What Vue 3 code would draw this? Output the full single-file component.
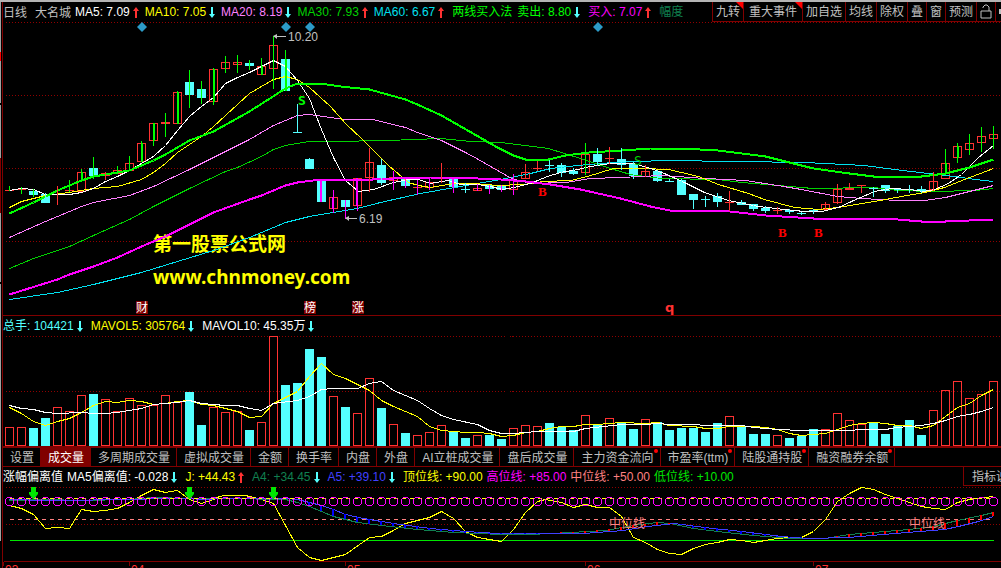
<script setup>
import { ref } from 'vue'

const X0 = 9
const STEP = 12
const xOf = (i) => X0 + STEP * i

// kind, high, body top, body bottom, low, volume top, wick colour, strip inside the body
const G = '#00ff00'
const M = '#ff00ff'
const R = '#ff3232'
const C = '#54ffff'
const rows = [
  ['r', 186, 190, 190, 190, 427, G], ['r', 187, 189, 189, 193, 427, G], ['c', 189, 191, 194, 196, 428, G],
  ['c', 193, 194, 202, 202, 418, C], ['r', 186, 194, 194, 204, 407, R], ['r', 180, 190, 190, 191, 411, G],
  ['r', 169, 172, 191, 180, 395, G, 1], ['c', 157, 168, 175, 178, 394, G], ['r', 172, 173, 175, 179, 399, R],
  ['r', 166, 170, 173, 173, 411, G], ['r', 156, 163, 170, 168, 398, G], ['r', 141, 143, 161, 161, 405, G, 1],
  ['r', 123, 123, 140, 145, 405, G, 1], ['r', 113, 122, 123, 136, 395, G], ['r', 91, 92, 123, 123, 402, G, 1],
  ['c', 70, 82, 94, 107, 392, G], ['c', 81, 89, 97, 103, 425, G], ['r', 68, 69, 101, 104, 407, G, 1],
  ['r', 56, 62, 68, 72, 412, G], ['r', 55, 62, 64, 72, 411, G], ['c', 60, 63, 65, 69, 430, G],
  ['r', 58, 66, 74, 74, 422, G, 1], ['r', 36, 45, 68, 88, 336, G], ['c', 50, 59, 90, 90, 385, G, 1],
  ['c', 104, 132, 132, 132, 383, C], ['c', 158, 159, 168, 168, 349, C], ['c', 179, 179, 201, 201, 357, M, 1],
  ['r', 190, 197, 208, 212, 396, M, 1], ['c', 200, 200, 206, 218, 407, M], ['r', 178, 178, 205, 210, 413, M, 1],
  ['r', 148, 162, 177, 191, 378, R], ['c', 159, 165, 182, 184, 408, C], ['r', 171, 177, 180, 189, 424, M],
  ['c', 177, 179, 185, 187, 433, M], ['r', 180, 187, 187, 194, 435, M], ['r', 178, 182, 187, 189, 432, M],
  ['r', 163, 178, 178, 182, 425, R], ['c', 178, 178, 186, 192, 432, M, 1], ['c', 183, 189, 189, 192, 438, C],
  ['r', 184, 188, 190, 190, 435, M], ['c', 185, 185, 188, 193, 435, M], ['c', 185, 186, 189, 191, 439, M],
  ['r', 174, 180, 189, 194, 428, M], ['r', 164, 172, 178, 178, 425, R], ['r', 161, 168, 168, 170, 426, R],
  ['c', 160, 165, 165, 171, 423, C], ['c', 163, 165, 172, 176, 427, C], ['c', 168, 171, 173, 174, 430, C],
  ['r', 143, 154, 172, 174, 415, G], ['c', 148, 154, 161, 165, 424, C], ['r', 147, 158, 158, 163, 418, R],
  ['c', 148, 159, 164, 169, 423, C], ['c', 162, 164, 175, 178, 429, C], ['r', 165, 171, 176, 176, 419, R],
  ['c', 170, 171, 180, 181, 422, C], ['c', 179, 181, 181, 181, 430, C], ['c', 179, 180, 194, 194, 428, C],
  ['c', 194, 194, 199, 208, 428, C], ['c', 196, 199, 199, 206, 432, C], ['c', 193, 196, 201, 206, 423, C],
  ['r', 191, 202, 202, 210, 416, R], ['c', 200, 202, 204, 204, 426, C], ['c', 204, 204, 208, 210, 434, C],
  ['c', 206, 208, 210, 212, 434, C], ['r', 207, 210, 210, 213, 435, R], ['c', 209, 210, 211, 213, 438, C],
  ['c', 212, 213, 213, 214, 436, C], ['c', 209, 210, 211, 213, 429, C], ['r', 202, 204, 209, 209, 429, R],
  ['r', 184, 189, 202, 203, 413, R], ['r', 183, 188, 189, 189, 420, R], ['r', 185, 185, 185, 192, 424, R],
  ['c', 187, 187, 188, 196, 422, C], ['c', 185, 185, 190, 192, 434, C], ['c', 189, 189, 189, 192, 426, C],
  ['c', 185, 189, 189, 192, 420, C], ['c', 186, 189, 190, 192, 435, C], ['r', 172, 181, 189, 190, 410, R],
  ['r', 149, 163, 178, 172, 390, G, 1], ['r', 143, 146, 157, 162, 381, G, 1], ['r', 134, 143, 149, 154, 398, G],
  ['r', 127, 136, 142, 151, 394, G], ['r', 126, 134, 138, 148, 381, G]
]
const bars = rows.map(([kind, high, top, bottom, low, vol, wick, strip], i) => ({
  x: xOf(i), up: kind === 'r', high, top, bottom, low, vol, wick, strip, colour: kind === 'r' ? R : C
}))

const priceLines = [
  { c: '#00e1f0', w: 1, p: '9,299 57,292 93,284 141,272 177,261 213,250 249,237 285,222 309,216 333,212 357,208 380,202 420,193 460,186 500,179 530,173 550,168 577,165 613,162 663,160 738,161 804,162 864,165 894,169 928,173 954,176 975,179 993,181' },
  { c: '#00d200', w: 1, p: '9,268 33,258 69,246 93,235 129,219 153,206 189,188 225,171 237,167 261,156 273,149 285,145 309,141 330,141 387,140 440,138 470,141 500,142 548,148 580,158 610,168 630,174 661,178 717,179 741,182 777,185 813,188 873,187 897,190 933,191 975,190 993,188' },
  { c: '#ff80ff', w: 1, p: '9,237 45,221 81,206 93,202 129,195 153,186 189,169 213,157 249,139 273,125 297,115 309,114 330,117 345,119 372,119 405,127 417,132 441,140 465,152 478,159 511,178 530,183 565,182 590,178 620,177 661,175 705,178 745,180 777,185 801,189 837,196 861,198 897,200 924,200 945,197 969,191 993,185' },
  { c: '#ffff00', w: 1, p: '9,207 21,201 45,195 69,192 93,188 117,186 141,179 153,172 165,163 177,152 201,136 213,126 249,93 273,79 285,76 297,79 309,87 330,106 345,123 362,139 388,165 408,182 418,185 430,187 453,183 473,183 497,185 523,184 543,181 570,180 587,176 613,168 643,168 668,169 681,172 698,176 718,184 748,193 764,199 794,207 818,209 838,207 874,201 901,196 924,192 944,187 964,179 993,168' },
  { c: '#ffffff', w: 1, p: '9,190 21,188 33,189 45,194 57,194 69,194 81,192 93,188 105,181 117,176 129,170 141,163 153,156 165,145 177,130 189,116 201,106 213,97 225,83 237,77 249,72 261,66 273,60 285,66 297,80 309,98 321,129 333,157 345,180 358,191 373,189 393,182 408,179 418,179 430,183 448,180 460,184 477,184 490,186 502,189 513,187 530,183 547,176 560,172 577,169 590,166 610,163 633,163 650,168 664,173 684,182 704,192 728,200 758,206 784,209 804,211 821,211 838,207 851,201 874,191 891,188 909,189 923,191 934,189 948,183 961,174 978,157 993,145' },
  { c: '#00ff00', w: 2, p: '9,213 33,202 57,190 81,180 93,176 129,170 153,160 165,154 189,140 213,131 249,111 285,88 297,83 320,83 340,86 369,89 405,99 417,104 441,115 483,139 497,147 513,155 525,159 548,159 565,155 589,152 621,150 650,148 681,148 717,150 741,153 765,156 789,162 813,168 849,173 873,176 921,176 945,173 969,167 993,159' },
  { c: '#ff00ff', w: 2, p: '9,294 57,279 69,274 93,266 117,257 141,246 165,236 189,224 213,212 249,199 261,195 285,185 297,182 321,179 372,179 393,178 430,177 455,177 500,179 525,181 550,184 580,189 620,198 650,206 669,210 729,211 765,215 813,218 885,218 921,221 945,221 993,219' }
]

const volMa5 = '9,407 21,413 33,421 45,425 57,421 69,418 81,412 93,405 105,401 117,402 129,400 141,401 153,404 165,403 177,401 189,400 201,404 213,405 225,408 237,411 249,417 261,416 273,403 285,397 297,391 309,376 321,363 333,374 345,378 357,384 369,390 381,400 393,406 405,411 417,416 429,426 441,430 453,431 465,432 477,432 489,433 501,436 513,435 525,432 537,431 549,428 561,426 573,426 585,424 597,424 609,423 621,422 645,423 657,422 669,425 693,426 705,428 717,428 729,426 753,426 765,427 777,429 789,433 801,435 813,434 825,433 837,429 849,425 861,423 873,422 885,423 897,425 909,425 921,428 933,425 945,416 957,407 969,403 981,395 993,389'
const volMa10 = '9,405 21,408 33,409 45,412 57,413 81,412 93,413 105,413 117,412 141,408 153,404 165,403 177,402 189,400 201,403 225,405 237,405 249,408 261,410 273,403 297,400 309,396 321,389 333,388 357,388 369,383 381,381 393,390 417,400 429,408 441,415 453,419 477,424 489,430 501,433 513,433 537,431 573,431 585,428 621,424 645,424 657,423 669,424 693,424 705,425 741,425 753,427 777,429 801,430 837,430 873,429 885,429 897,427 921,425 933,423 945,420 957,416 969,414 981,411 993,407'

const lineJ = '9,505 21,508 33,514 45,528 57,527 69,528 81,509 93,511 105,510 117,508 129,502 141,495 153,489 165,492 177,490 189,499 201,503 213,499 219,496 225,495 245,495 261,499 273,503 285,525 297,547 309,557 321,560 333,557 345,554 369,537 381,536 393,530 405,523 429,517 441,511 453,518 465,531 477,537 489,539 501,541 513,529 525,512 537,501 545,499 561,502 573,507 585,504 597,507 609,507 621,516 633,537 645,542 657,549 669,553 681,554 693,548 705,544 717,542 729,539 741,540 753,542 765,540 777,538 789,537 801,537 813,531 825,519 837,501 849,493 861,487 873,489 885,494 897,498 909,502 921,506 933,508 945,509 957,502 969,499 993,496'
const lineA5 = '9,499 45,500 141,499 153,498 189,498 201,499 225,498 285,498 297,499 309,502 321,505 333,509 345,514 363,518 393,523 430,528 465,531 497,533 583,533 623,530 647,526 665,524 674,523 704,527 741,531 781,536 808,538 848,537 894,533 944,529 958,526 978,521 993,516'
const lineA4 = '9,500 45,499 81,500 129,499 153,497 189,498 225,498 285,499 297,502 309,506 321,511 333,516 345,519 357,522 381,525 417,529 453,532 501,534 530,534 570,532 605,530 633,525 657,522 670,523 693,528 717,531 753,535 789,538 825,538 849,534 885,531 909,529 933,526 957,520 981,515 993,512'

function valueAt(line, x) {
  const pts = line.split(' ').map((s) => s.split(',').map(Number))
  for (let i = 1; i < pts.length; i++) {
    const [ax, ay] = pts[i - 1]
    const [bx, by] = pts[i]
    if (x <= bx) return Math.round(ay + ((by - ay) * (x - ax)) / (bx - ax))
  }
  return pts[pts.length - 1][1]
}
const spreads = bars
  .filter((b) => b.x >= 309)
  .map((b) => {
    const a4 = valueAt(lineA4, b.x)
    const a5 = valueAt(lineA5, b.x)
    return { x: b.x, y: Math.min(a4, a5), h: Math.abs(a4 - a5), c: a4 > a5 ? '#0000ff' : '#ff0000' }
  })
  .filter((s) => s.h > 0)

const priceLegend = [
  { t: 'MA5: 7.09', c: '#ffffff', d: 'up' },
  { t: 'MA10: 7.05', c: '#ffff00', d: 'down' },
  { t: 'MA20: 8.19', c: '#ff80ff', d: 'down' },
  { t: 'MA30: 7.93', c: '#00d200', d: 'up' },
  { t: 'MA60: 6.67', c: '#00e1f0', d: 'up' }
]
const signalLegend = [
  { t: '卖出: 8.80', c: '#00ff00', d: 'down' },
  { t: '买入: 7.07', c: '#ff00ff', d: 'up' },
  { t: '幅度', c: '#108050' }
]
const volumeLegend = [
  { t: '总手: 104421', c: '#54ffff', d: 'down' },
  { t: 'MAVOL5: 305764', c: '#ffff00', d: 'down' },
  { t: 'MAVOL10: 45.35万', c: '#ffffff', d: 'down' }
]
const biasLegend = [
  { t: 'MA5偏离值: -0.028', c: '#ffffff', d: 'down' },
  { t: 'J: +44.43', c: '#ffff00', d: 'up' },
  { t: 'A4: +34.45', c: '#108050', d: 'down' },
  { t: 'A5: +39.10', c: '#4040ff', d: 'down' }
]
const levels = [
  { t: '顶位线: +90.00', c: '#ffff00' },
  { t: '高位线: +85.00', c: '#ff00ff' },
  { t: '中位线: +50.00', c: '#ff8080' },
  { t: '低位线: +10.00', c: '#00e600' }
]
const tools = [
  { t: '九转', flag: true }, { t: '重大事件', flag: true, wide: true }, { t: '加自选' }, { t: '均线' },
  { t: '除权' }, { t: '叠' }, { t: '窗' }, { t: '预测' }
]
const tabs = [
  { t: '设置' }, { t: '成交量' }, { t: '多周期成交量' }, { t: '虚拟成交量' }, { t: '金额' }, { t: '换手率' },
  { t: '内盘' }, { t: '外盘' }, { t: 'AI立桩成交量' }, { t: '盘后成交量' }, { t: '主力资金流向', dot: true },
  { t: '市盈率(ttm)', dot: true }, { t: '陆股通持股', dot: true }, { t: '融资融券余额', dot: true }
]
const active = ref('成交量')
const months = [{ x: 3, t: '03' }, { x: 129, t: '04' }, { x: 345, t: '05' }, { x: 585, t: '06' }, { x: 813, t: '07' }]
const badges = [{ x: 136, t: '财' }, { x: 304, t: '榜' }, { x: 352, t: '涨' }]
const arrows = { up: 'M3 0 6 4H4V11H2V4H0Z', down: 'M2 0H4V7H6L3 11 0 7H2Z' }
</script>

<template>
  <main class="terminal">
    <div class="edge"></div>
    <div class="panels">
      <header class="bar price-bar">
        <span class="name">日线</span>
        <span class="name stock">大名城</span>
        <span v-for="l in priceLegend" :key="l.t" class="item average" :style="{ color: l.c }">
          {{ l.t }}<svg class="arrow" :class="l.d" viewBox="0 0 6 11"><path :d="arrows[l.d]" /></svg>
        </span>
        <span class="item formula">两线买入法</span>
        <span v-for="l in signalLegend" :key="l.t" class="item" :style="{ color: l.c }">
          {{ l.t }}<svg v-if="l.d" class="arrow" :class="l.d" viewBox="0 0 6 11"><path :d="arrows[l.d]" /></svg>
        </span>
        <nav class="tools">
          <button v-for="b in tools" :key="b.t" type="button" :class="{ flag: b.flag, wide: b.wide }">{{ b.t }}</button>
          <button type="button" class="lock" aria-label="锁定">
            <svg viewBox="0 0 12 15"><path d="M1 7H11V14H1ZM3 4V3L5 1H7L9 3V7" /></svg>
          </button>
          <button type="button" class="more" aria-label="更多"><i></i></button>
        </nav>
      </header>

      <svg class="chart" viewBox="3 22 998 293">
        <g class="crisp" transform="translate(0.5 0.5)">
          <path class="grid" d="M5 22H1001M5 95H1001M5 168H1001M5 241H1001" />
        </g>
        <g class="mark">
          <text class="cn-mark" x="153" y="251">第一股票公式网</text>
          <text class="en-mark" x="153" y="284">www.chnmoney.com</text>
        </g>
        <g class="crisp">
          <template v-for="b in bars" :key="b.x">
            <rect v-if="!b.up || b.bottom - b.top < 2" :x="b.x - 4" :y="b.top" width="9" :height="b.bottom - b.top + 1" :fill="b.colour" />
            <path v-else :d="`M${b.x - 4} ${b.top}h9v${b.bottom - b.top + 1}h-9zm1 1v${b.bottom - b.top - 1}h7v-${b.bottom - b.top - 1}z`" fill-rule="evenodd" :fill="b.colour" />
          </template>
        </g>
        <g class="crisp" transform="translate(0.5 0.5)">
          <polyline v-for="l in priceLines" :key="l.c" :points="l.p" :stroke="l.c" :stroke-width="l.w" />
        </g>
        <g class="crisp" transform="translate(0.5 0)">
          <path v-for="b in bars" :key="b.x" :d="`M${b.x} ${b.high}V${b.low + 1}`" :stroke="b.wick" />
        </g>
        <g class="crisp">
          <template v-for="b in bars" :key="b.x">
            <path v-if="b.strip" :d="`M${b.wick === M ? b.x : b.x + 1} ${b.top}V${Math.min(b.low, b.bottom) + 1}`" :stroke="b.wick" stroke-width="2" />
          </template>
        </g>
        <path v-for="x in [142, 286, 310, 598]" :key="x" :d="`M${x} 22l5 5-5 5-5-5z`" fill="#2c9bc8" />
        <g class="note">
          <path class="crisp" d="M274 36.500H286M346 218.500H357" />
          <path class="tip" d="M273 36l4-2v5zM345 218l4-2v5z" />
          <text x="288" y="41">10.20</text>
          <text x="359" y="223">6.19</text>
        </g>
        <text class="sell" x="298" y="105">S</text>
        <text class="sell faint" x="634" y="165">S</text>
        <g class="buy">
          <text x="538" y="196">B</text>
          <text x="778" y="237">B</text>
          <text x="814" y="237">B</text>
        </g>
        <text class="quote" x="665" y="312">q</text>
        <g v-for="b in badges" :key="b.t">
          <rect :x="b.x" y="301" width="12" height="13" fill="#800000" />
          <text class="badge" :x="b.x" y="312">{{ b.t }}</text>
        </g>
      </svg>

      <header class="bar volume-bar">
        <span v-for="l in volumeLegend" :key="l.t" class="item" :style="{ color: l.c }">
          {{ l.t }}<svg class="arrow" :class="l.d" viewBox="0 0 6 11"><path :d="arrows[l.d]" /></svg>
        </span>
      </header>

      <svg class="chart" viewBox="3 336 998 110">
        <g class="crisp" transform="translate(0.5 0.5)">
          <path class="grid" d="M5 336H1001M5 391H1001" />
        </g>
        <g class="crisp">
          <template v-for="b in bars" :key="b.x">
            <rect v-if="!b.up" :x="b.x - 4" :y="b.vol" width="9" :height="446 - b.vol" :fill="b.colour" />
            <path v-else :d="`M${b.x - 4} ${b.vol}h9V446h-9zm1 1V445h7V${b.vol + 1}z`" fill-rule="evenodd" :fill="b.colour" />
          </template>
        </g>
        <g class="crisp" transform="translate(0.5 0.5)">
          <polyline :points="volMa5" stroke="#ffff00" />
          <polyline :points="volMa10" stroke="#ffffff" />
        </g>
      </svg>

      <nav class="tabs">
        <button v-for="t in tabs" :key="t.t" type="button" :class="{ on: active === t.t, dot: t.dot }" @click="active = t.t">{{ t.t }}</button>
      </nav>

      <header class="bar bias-bar">
        <span class="title">涨幅偏离值</span>
        <span v-for="l in biasLegend" :key="l.t" class="item" :style="{ color: l.c }">
          {{ l.t }}<svg class="arrow" :class="l.d" viewBox="0 0 6 11"><path :d="arrows[l.d]" /></svg>
        </span>
        <span v-for="l in levels" :key="l.t" class="level" :style="{ color: l.c }">{{ l.t }}</span>
        <button type="button" class="settings">指标说明</button>
      </header>

      <svg class="chart" viewBox="3 487 998 81">
        <g class="crisp" transform="translate(0.5 0.5)">
          <path class="grid" d="M5 487H1001M5 524H1001" />
          <path d="M9 540H993" stroke="#00e600" />
          <path d="M9 519H993" stroke="#ff8080" stroke-dasharray="4 4" />
          <path d="M3 561H1001" stroke="#800000" />
          <path v-for="m in months" :key="m.x" :d="`M${m.x} 561v4`" stroke="#800000" />
          <polyline :points="lineJ" stroke="#ffff00" />
          <polyline :points="lineA4" stroke="#108050" />
          <polyline :points="lineA5" stroke="#4040ff" />
          <path d="M9 498H993" stroke="#ffff00" stroke-dasharray="4 4" />
        </g>
        <g class="crisp">
          <rect v-for="s in spreads" :key="s.x" :x="s.x - 1" :y="s.y" width="2" :height="s.h" :fill="s.c" />
        </g>
        <g class="rings crisp" transform="translate(0.5 0.5)">
          <path v-for="b in bars" :key="b.x" :d="`M${b.x - 2} 497h4l2 2v4l-2 2h-4l-2-2v-4z`" />
        </g>
        <path v-for="x in [33, 189, 273]" :key="x" :d="`M${x - 2} 486h5v6h2v2l-4 5h-1l-4-5v-2h2z`" fill="#00e600" />
        <text class="mid" x="609" y="528">中位线</text>
        <text class="mid" x="909" y="528">中位线</text>
        <text v-for="m in months" :key="m.t" class="month" :x="m.x + 2" y="574">{{ m.t }}</text>
      </svg>
    </div>
  </main>
</template>

<style>
body {
  background: #000;
}
</style>

<style scoped>
.terminal {
  display: flex;
  border-top: 2px solid #b4b4b4;
  background: #000;
  color: #c0c0c0;
  font: 12px/20px "Liberation Sans", "Noto Sans CJK SC", sans-serif;
  overflow: hidden;
}
.edge {
  flex: none;
  width: 1px;
  margin-right: 1px;
  background: linear-gradient(#a0a0a0 0 50px, #f00 50px 59px, #a0a0a0 59px 101px, #000 101px 103px, #a0a0a0 103px 156px, #800000 156px 211px, #a0a0a0 211px 280px, #000 280px 282px, #a0a0a0 282px 539px, #000 539px);
}
.panels {
  flex: 1;
  min-width: 0;
  border-left: 1px solid #800000;
}
.bar {
  display: flex;
  height: 20px;
  white-space: nowrap;
  overflow: hidden;
}
.price-bar {
  line-height: 22px;
}
.name {
  flex: none;
}
.stock {
  margin: 0 4px 0 8px;
}
.item {
  display: flex;
  flex: none;
  align-items: center;
  margin-right: 8px;
}
.average {
  margin-right: 6px;
}
.formula {
  margin: 0 5px 0 2px;
  color: #00ff00;
}
.arrow {
  width: 6px;
  height: 11px;
  margin-left: 3px;
}
.arrow.up {
  fill: #ff3232;
}
.arrow.down {
  fill: #54ffff;
}
button {
  position: relative;
  flex: none;
  box-sizing: border-box;
  margin: 0;
  border: 0;
  padding: 0;
  background: none;
  color: inherit;
  font: inherit;
  line-height: 20px;
  white-space: nowrap;
}
.tools {
  display: flex;
  flex: none;
  height: 20px;
  margin-left: auto;
  background: #000;
}
.tools button {
  height: 20px;
  padding: 0 3px;
  border-left: 1px solid #800000;
  border-bottom: 1px solid #800000;
  line-height: 21px;
}
.tools .wide {
  padding: 0 5px;
}
.tools .flag::after {
  content: "";
  position: absolute;
  top: 0;
  right: 0;
  border-top: 7px solid #f00;
  border-left: 7px solid transparent;
}
.lock svg {
  display: block;
  width: 12px;
  height: 15px;
  fill: none;
  stroke: #c0c0c0;
}
.tools .more {
  width: 6px;
  padding: 0 0 0 3px;
}
.more i {
  display: block;
  width: 2px;
  height: 5px;
  background: #c0c0c0;
}
.chart {
  display: block;
  width: 100%;
  height: auto;
}
.crisp {
  shape-rendering: crispEdges;
}
.grid {
  stroke: #900000;
  stroke-dasharray: 1 2;
}
polyline {
  fill: none;
}
.mark {
  fill: #ffff00;
  font-weight: bold;
}
.cn-mark {
  font-family: "Noto Sans CJK SC", sans-serif;
  font-size: 19px;
}
.en-mark {
  font-family: "Noto Sans", sans-serif;
  font-size: 19px;
}
.note {
  fill: #c0c0c0;
  stroke: none;
}
.note .crisp {
  stroke: #c0c0c0;
}
.sell {
  fill: #00ff00;
  font: bold 13px "DejaVu Sans Mono", monospace;
}
.faint {
  fill: #00d200;
  font-weight: normal;
}
.buy {
  fill: #f00;
  font: bold 13px "Liberation Serif", serif;
}
.quote {
  fill: #ff3232;
  font: bold 13px "DejaVu Sans", sans-serif;
}
.badge {
  fill: #fff;
}
.volume-bar {
  border-top: 1px solid #800000;
}
.tabs {
  display: flex;
  height: 21px;
  box-sizing: border-box;
  border-top: 2px solid #800000;
  border-bottom: 1px solid #800000;
}
.tabs button {
  height: 18px;
  padding: 0 6px 0 7px;
  border-right: 1px solid #800000;
}
.tabs .on {
  background: #800000;
  color: #fff;
}
.tabs .dot::after {
  content: "";
  position: absolute;
  top: 1px;
  right: 2px;
  width: 4px;
  height: 4px;
  border-radius: 50%;
  background: #f00;
}
.title {
  flex: none;
  margin-right: 4px;
  color: #fff;
}
.level {
  flex: none;
  margin-right: 4px;
}
.settings {
  width: 38px;
  height: 19px;
  margin-left: auto;
  padding-left: 8px;
  border-left: 1px solid #800000;
  border-bottom: 1px solid #800000;
  text-align: left;
  overflow: hidden;
}
.rings {
  fill: none;
  stroke: #ff00ff;
}
.mid {
  fill: #ff8080;
}
.month {
  fill: #ff3232;
}
</style>
